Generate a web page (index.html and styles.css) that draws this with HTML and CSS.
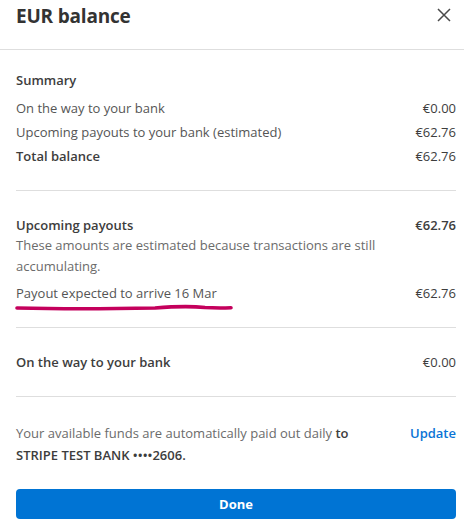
FILE: index.html
```html
<!DOCTYPE html>
<html lang="en">
<head>
<meta charset="utf-8">
<title>EUR balance</title>
<link rel="stylesheet" href="styles.css">
</head>
<body>
<div class="panel">
  <header class="header">
    <h1 class="title">EUR balance</h1>
    <button class="close" aria-label="Close">
      <svg width="14" height="14" viewBox="0 0 14 14"><path d="M1 1L13 13M13 1L1 13" stroke="#4a4a4a" stroke-width="1.5" fill="none"/></svg>
    </button>
  </header>

  <section class="section first">
    <div class="heading">Summary</div>
    <div class="row"><span class="label">On the way to your bank</span><span class="amount">€0.00</span></div>
    <div class="row"><span class="label">Upcoming payouts to your bank (estimated)</span><span class="amount">€62.76</span></div>
    <div class="row strong"><span class="label">Total balance</span><span class="amount">€62.76</span></div>
  </section>

  <section class="section">
    <div class="row tight"><span class="label heading-label">Upcoming payouts</span><span class="amount semi">€62.76</span></div>
    <p class="desc">These amounts are estimated because transactions are still accumulating.</p>
    <div class="row payout">
      <span class="label marked">Payout expected to arrive 16 Mar
        <svg class="scribble" width="220" height="10" viewBox="0 0 220 10"><path d="M2 5 C40 6, 90 6, 140 5 C165 3, 175 3, 190 4.5 C200 5.2, 210 5, 216 4.8" stroke="#c4005c" stroke-width="3.6" stroke-linecap="round" fill="none"/></svg>
      </span>
      <span class="amount">€62.76</span>
    </div>
  </section>

  <section class="section">
    <div class="row"><span class="label heading-label">On the way to your bank</span><span class="amount">€0.00</span></div>
  </section>

  <footer class="footer">
    <div class="info">
      <p class="note">Your available funds are automatically paid out daily <b>to</b><br><b>STRIPE TEST BANK ••••2606.</b></p>
      <a class="update" href="#">Update</a>
    </div>
    <button class="done">Done</button>
  </footer>
</div>
</body>
</html>
```
FILE: styles.css
```css
* { box-sizing: border-box; }
html, body { margin: 0; padding: 0; background: #fff; }
body {
  font-family: "Open Sans", "Noto Sans", sans-serif;
  font-size: 13px;
  color: #3d3d3d;
  width: 464px;
  height: 526px;
  overflow: hidden;
}
.panel { width: 464px; }
.header {
  height: 50px;
  border-bottom: 1px solid #dedede;
  display: flex;
  justify-content: space-between;
  align-items: flex-start;
  padding: 2px 13px 0 16px;
}
.title {
  margin: 0;
  font-size: 19px;
  line-height: 28px;
  font-weight: 700;
  color: #333;
  letter-spacing: -0.2px;
}
.close {
  border: 0;
  background: none;
  padding: 0;
  margin-top: 6px;
  width: 14px;
  height: 14px;
  display: flex;
}
.section {
  margin: 0 8px 0 16px;
  padding: 22px 0 22px;
  border-bottom: 1px solid #dedede;
}
.section.first { padding-top: 18px; }
.heading {
  font-weight: 600;
  line-height: 24px;
  margin-bottom: 4px;
  color: #3d3d3d;
}
.row {
  display: flex;
  justify-content: space-between;
  line-height: 24px;
}
.label { color: #555; }
.amount { color: #3d3d3d; font-weight: 400; }
.amount.semi { font-weight: 600; }
.row.strong .label { color: #3d3d3d; font-weight: 600; }
.label.heading-label { font-weight: 600; color: #3d3d3d; }
.row.tight { line-height: 20px; margin-top: 2px; }
.desc {
  margin: 0;
  color: #6b6b6b;
  line-height: 21px;
  padding-right: 70px;
}
.row.payout { margin-top: 4px; }
.marked { position: relative; }
.scribble {
  position: absolute;
  left: -1px;
  top: 22px;
}
.footer { padding: 25px 8px 0 16px; }
.info {
  display: flex;
  justify-content: space-between;
  align-items: flex-start;
}
.note {
  margin: 0;
  line-height: 22px;
  color: #6b6b6b;
  width: 350px;
}
.note b { font-weight: 600; color: #3d3d3d; }
.update {
  color: #0a74d6;
  font-weight: 600;
  text-decoration: none;
  line-height: 22px;
}
.done {
  display: block;
  width: 100%;
  height: 30px;
  margin-top: 23px;
  border: 0;
  border-radius: 4px;
  background: #0074d4;
  color: #fff;
  font-family: inherit;
  font-size: 13px;
  font-weight: 700;
}
```
